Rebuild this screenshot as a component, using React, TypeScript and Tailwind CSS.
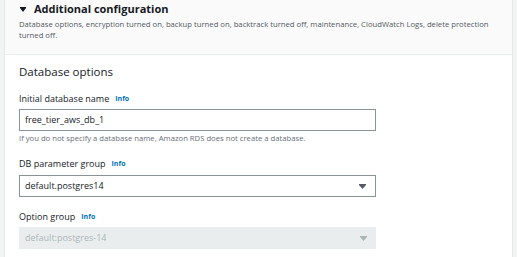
import React from 'react'

const font = { fontFamily: '"Open Sans", "Noto Sans", sans-serif' }

const Caret = ({ color, w = 7 }: { color: string; w?: number }) => (
    <svg width={w} height="5" viewBox="0 0 7 5" preserveAspectRatio="none" className="shrink-0">
        <path d="M0 0h7v1L3.5 5 0 1z" fill={color} />
    </svg>
)

const Label = ({ text }: { text: string }) => (
    <div className="flex items-center h-[12px] text-[9px] leading-[12px] text-[#16191f]">
        <span>{text}</span>
        <span className="ml-[6px] text-[7px] font-bold text-[#0073bb]">Info</span>
    </div>
)

const App: React.FC = () => {
    return (
        <div className="flex w-[517px] h-[257px] overflow-hidden bg-white" style={font}>
            <div className="w-[4px] bg-[#f2f3f3]" />
            <div className="flex-1 flex flex-col border-l border-r border-[#e4e8e8] bg-white">
                <div className="bg-[#fafafa] border-b border-[#eaeded] pl-[14px] pr-[10px] pt-[1px] h-[55px]">
                    <div className="flex items-center h-[16px]">
                        <span className="ml-[1px] mr-[8px]">
                            <Caret color="#16191f" w={6} />
                        </span>
                        <span className="text-[11px] leading-[16px] font-bold text-[#16191f]">
                            Additional configuration
                        </span>
                    </div>
                    <p className="mt-[2px] text-[7.7px] leading-[11px] text-[#545b64]">
                        Database options, encryption turned on, backup turned on, backtrack turned off,
                        maintenance, CloudWatch Logs, delete protection turned off.
                    </p>
                </div>

                <div className="pl-[14px] pt-[9px]">
                    <h2 className="text-[11.5px] leading-[16px] text-[#16191f]">Database options</h2>

                    <div className="mt-[13px]">
                        <Label text="Initial database name" />
                        <div className="mt-[4px] w-[357px] h-[22px] border border-[#879596] flex items-center pl-[5px] text-[9px] text-[#16191f]">
                            free_tier_aws_db_1
                        </div>
                        <p className="mt-[2px] text-[7.7px] leading-[11px] text-[#687078]">
                            If you do not specify a database name, Amazon RDS does not create a database.
                        </p>
                    </div>

                    <div className="mt-[14px]">
                        <Label text="DB parameter group" />
                        <div className="mt-[5px] w-[357px] h-[22px] border border-[#879596] flex items-center justify-between pl-[5px] pr-[9px] text-[9px] text-[#16191f]">
                            <span>default.postgres14</span>
                            <Caret color="#545b64" />
                        </div>
                    </div>

                    <div className="mt-[14px]">
                        <Label text="Option group" />
                        <div className="mt-[4px] w-[357px] h-[22px] bg-[#eaeded] flex items-center justify-between pl-[6px] pr-[9px] text-[9px] text-[#aab7b8]">
                            <span>default:postgres-14</span>
                            <Caret color="#aab7b8" />
                        </div>
                    </div>
                </div>
            </div>
            <div className="w-[4px] bg-[#f2f3f3]" />
        </div>
    )
}

export default App
